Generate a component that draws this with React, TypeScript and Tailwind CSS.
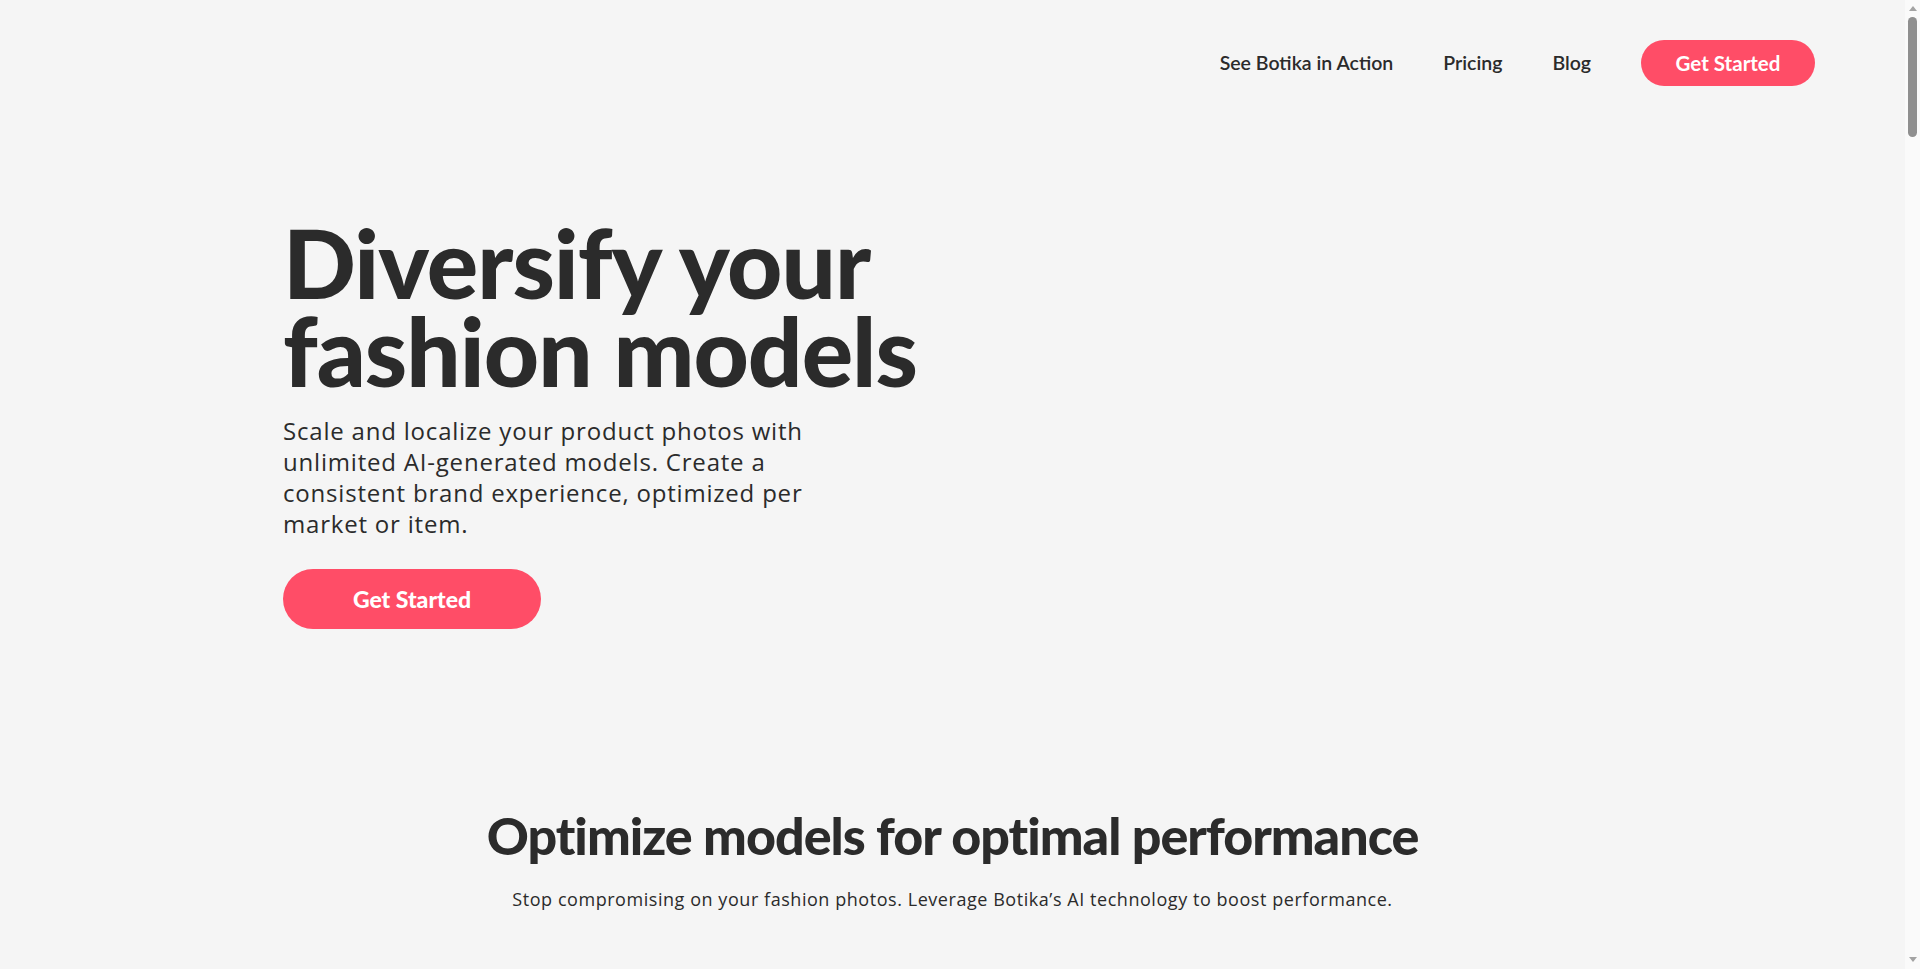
import React from 'react';

const heading = { fontFamily: 'Lato, "Noto Sans", sans-serif' };
const body = { fontFamily: '"Open Sans", "Noto Sans", sans-serif' };

function NavBar() {
  return (
    <header className="flex justify-end pt-[40px] pr-[90px]" style={heading}>
      <nav className="flex items-center gap-[50px] text-[19.5px] font-semibold text-[#2b2b2b]">
        <a href="#" className="hover:text-[#ff4d67]">See Botika in Action</a>
        <a href="#" className="hover:text-[#ff4d67]">Pricing</a>
        <a href="#" className="hover:text-[#ff4d67]">Blog</a>
        <a
          href="#"
          className="flex h-[46px] w-[174px] items-center justify-center rounded-full bg-[#ff4d67] text-[20.5px] font-bold text-white"
        >
          Get Started
        </a>
      </nav>
    </header>
  );
}

function Hero() {
  return (
    <section className="flex flex-col items-start pl-[283px] pt-[132px]">
      <h1
        className="text-[96px] leading-[88px] font-black tracking-[-1px] text-[#2b2b2b]"
        style={heading}
      >
        Diversify your
        <br />
        fashion models
      </h1>
      <p className="mt-[21px] text-[24px] leading-[31px] tracking-[0.8px] text-[#2b2b2b]" style={body}>
        Scale and localize your product photos with
        <br />
        unlimited AI-generated models. Create a
        <br />
        consistent brand experience, optimized per
        <br />
        market or item.
      </p>
      <a
        href="#"
        className="mt-[30px] flex h-[60px] w-[258px] items-center justify-center rounded-full bg-[#ff4d67] text-[23px] font-black text-white"
        style={heading}
      >
        Get Started
      </a>
    </section>
  );
}

function Optimize() {
  return (
    <section className="flex flex-col items-center pt-[176px] text-[#2b2b2b]">
      <h2 className="text-[52px] leading-[60px] font-black tracking-[-1px]" style={heading}>
        Optimize models for optimal performance
      </h2>
      <p className="mt-[20px] text-[18px] leading-[28px] tracking-[0.55px]" style={body}>
        Stop compromising on your fashion photos. Leverage Botika’s AI technology to boost performance.
      </p>
    </section>
  );
}

function FakeScrollbar() {
  return (
    <aside className="flex w-[15px] shrink-0 flex-col items-center bg-[#fafafa]">
      <svg width="8" height="5" viewBox="0 0 8 5" className="mt-[6px]">
        <path d="M0 5 L4 0 L8 5 Z" fill="#a3a3a3" />
      </svg>
      <div className="mt-[6px] h-[120px] w-[9px] rounded-full bg-[#8f8f8f]" />
      <div className="flex-1" />
      <svg width="8" height="5" viewBox="0 0 8 5" className="mb-[7px]">
        <path d="M0 0 L4 5 L8 0 Z" fill="#a3a3a3" />
      </svg>
    </aside>
  );
}

export default function App() {
  return (
    <div className="flex h-screen overflow-hidden bg-[#f5f5f5]">
      <main className="flex-1 overflow-hidden">
        <NavBar />
        <Hero />
        <Optimize />
      </main>
      <FakeScrollbar />
    </div>
  );
}
